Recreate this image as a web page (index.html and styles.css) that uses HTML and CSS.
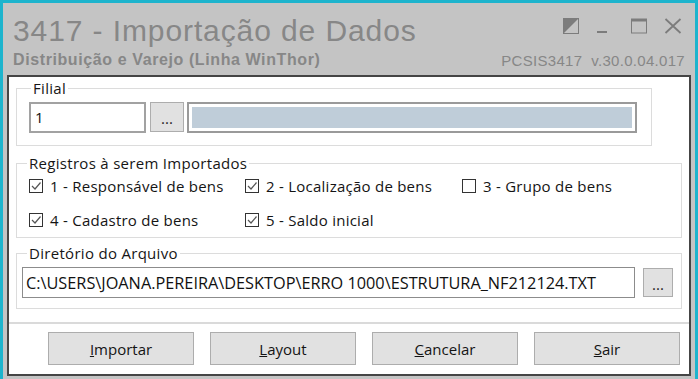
FILE: index.html
```html
<!DOCTYPE html>
<html lang="pt-BR">
<head>
    <meta charset="UTF-8">
    <title>3417 - Importação de Dados</title>
    <link rel="stylesheet" href="styles.css">
</head>
<body>
    <div class="window">
        <div class="titlebar">
            <div class="title-left">
                <div class="title">3417 - Importação de Dados</div>
                <div class="subtitle">Distribuição e Varejo (Linha WinThor)</div>
            </div>
            <div class="title-right">
                <div class="controls">
                    <svg width="18" height="16" viewBox="0 0 18 16">
                        <rect x="1.5" y="0.5" width="15" height="15" fill="none" stroke="#7c7c7c"/>
                        <polygon points="1.5,0.5 16.5,0.5 1.5,15.5" fill="#7c7c7c"/>
                    </svg>
                    <svg width="18" height="16" viewBox="0 0 18 16">
                        <rect x="1" y="13" width="10" height="2" fill="#7c7c7c"/>
                    </svg>
                    <svg width="18" height="16" viewBox="0 0 18 16">
                        <rect x="1.5" y="1.5" width="15" height="13.5" fill="none" stroke="#7c7c7c"/>
                        <rect x="1" y="0.5" width="16" height="3" fill="#7c7c7c"/>
                    </svg>
                    <svg width="18" height="16" viewBox="0 0 18 16">
                        <path d="M1.5 1 L16.5 15 M16.5 1 L1.5 15" stroke="#7c7c7c" stroke-width="1.8"/>
                    </svg>
                </div>
                <div class="version">PCSIS3417&nbsp; v.30.0.04.017</div>
            </div>
        </div>

        <div class="panel">
            <fieldset class="group filial">
                <legend>Filial</legend>
                <div class="group-body">
                    <div class="field code">1</div>
                    <button class="dots">...</button>
                    <div class="field desc"><div class="desc-fill"></div></div>
                </div>
            </fieldset>

            <fieldset class="group registros">
                <legend>Registros à serem Importados</legend>
                <div class="group-body">
                    <label class="opt"><span class="box"><svg width="12" height="12" viewBox="0 0 12 12"><polyline points="2,6 5,9 10.5,2.5" fill="none" stroke="#555" stroke-width="1.2"/></svg></span>1 - Responsável de bens</label>
                    <label class="opt"><span class="box"><svg width="12" height="12" viewBox="0 0 12 12"><polyline points="2,6 5,9 10.5,2.5" fill="none" stroke="#555" stroke-width="1.2"/></svg></span>2 - Localização de bens</label>
                    <label class="opt"><span class="box"></span>3 - Grupo de bens</label>
                    <label class="opt"><span class="box"><svg width="12" height="12" viewBox="0 0 12 12"><polyline points="2,6 5,9 10.5,2.5" fill="none" stroke="#555" stroke-width="1.2"/></svg></span>4 - Cadastro de bens</label>
                    <label class="opt"><span class="box"><svg width="12" height="12" viewBox="0 0 12 12"><polyline points="2,6 5,9 10.5,2.5" fill="none" stroke="#555" stroke-width="1.2"/></svg></span>5 - Saldo inicial</label>
                </div>
            </fieldset>

            <fieldset class="group diretorio">
                <legend>Diretório do Arquivo</legend>
                <div class="group-body">
                    <div class="field path">C:\USERS\JOANA.PEREIRA\DESKTOP\ERRO 1000\ESTRUTURA_NF212124.TXT</div>
                    <button class="dots small">...</button>
                </div>
            </fieldset>

            <div class="footer">
                <button class="action"><u>I</u>mportar</button>
                <button class="action"><u>L</u>ayout</button>
                <button class="action"><u>C</u>ancelar</button>
                <button class="action"><u>S</u>air</button>
            </div>
        </div>
    </div>
</body>
</html>
```

FILE: styles.css
```css
* {
    margin: 0;
    padding: 0;
    box-sizing: border-box;
}

body {
    width: 698px;
    height: 379px;
    overflow: hidden;
    background: #c4c4c4;
    font-family: "Open Sans", "Liberation Sans", sans-serif;
}

.window {
    width: 698px;
    height: 379px;
    border-top: 3px solid #1db4cd;
    border-left: 3px solid #1db4cd;
    border-right: 3px solid #1db4cd;
    display: flex;
    flex-direction: column;
}

/* title area */
.titlebar {
    height: 72px;
    flex-shrink: 0;
    display: flex;
    justify-content: space-between;
    padding: 11px 10px 0 10px;
    color: #878787;
    font-family: "Liberation Sans", Arial, sans-serif;
}

.title {
    font-size: 30px;
    line-height: 34px;
    letter-spacing: 0.9px;
}

.subtitle {
    margin-top: 3px;
    font-size: 16px;
    line-height: 18px;
    font-weight: bold;
    letter-spacing: 0.6px;
}

.title-right {
    display: flex;
    flex-direction: column;
    align-items: flex-end;
}

.controls {
    display: flex;
    gap: 16px;
    margin-top: 4px;
    margin-right: 3px;
}

.version {
    margin-top: 18px;
    font-size: 15px;
    line-height: 18px;
    letter-spacing: 0.3px;
}

/* main panel */
.panel {
    margin: 0 4px;
    height: 301px;
    background: #fff;
    border: 2px solid #454545;
    display: flex;
    flex-direction: column;
}

.group {
    border: 1px solid #dcdcdc;
    min-width: 0;
}

.group legend {
    margin-left: 10px;
    padding: 0 2px;
    font-size: 15px;
    line-height: 20px;
    letter-spacing: 0.3px;
    color: #161616;
}

.filial {
    margin: 1px 37px 0 7px;
}

.filial legend {
    margin-left: 14px;
}

.filial .group-body {
    display: flex;
    align-items: flex-start;
    padding: 4px 14px 12px 12px;
}

.field {
    height: 31px;
    border: 2px solid #a2a2a2;
    background: #fff;
    font-size: 15px;
    color: #111;
}

.code {
    width: 117px;
    padding: 3px 0 0 4px;
}

.dots {
    width: 34px;
    height: 30px;
    margin-left: 4px;
    background: #e1e1e1;
    border: 1px solid #adadad;
    font-family: "Open Sans", sans-serif;
    font-size: 15px;
    color: #222;
    padding-top: 2px;
}

.desc {
    flex: 1;
    margin-left: 3px;
    padding: 3px;
    border-color: #9a9a9a;
}

.desc-fill {
    height: 100%;
    background: #bfcdd9;
}

.registros {
    margin: 7px 7px 0 7px;
}

.registros .group-body {
    display: grid;
    grid-template-columns: 216px 217px 1fr;
    row-gap: 14px;
    padding: 3px 12px 7px 12px;
}

.opt {
    display: flex;
    align-items: center;
    gap: 7px;
    height: 20px;
    font-size: 15px;
    letter-spacing: 0.25px;
    color: #141414;
}

.box {
    width: 14px;
    height: 14px;
    border: 1px solid #333;
    background: #fff;
    display: flex;
    align-items: center;
    justify-content: center;
}

.diretorio {
    margin: 5px 7px 0 7px;
}

.diretorio .group-body {
    display: flex;
    align-items: flex-start;
    gap: 8px;
    padding: 4px 8px 10px 5px;
}

.path {
    flex: 1;
    border: 1px solid #8c8c8c;
    padding: 4px 0 0 3px;
    font-size: 16.3px;
    white-space: nowrap;
}

.dots.small {
    width: 30px;
    height: 29px;
    margin: 1px 0 0 0;
}

/* bottom buttons */
.footer {
    margin-top: auto;
    height: 52px;
    border-top: 2px solid #dadada;
    display: flex;
    gap: 16px;
    padding: 8px 0 9px 39px;
}

.action {
    width: 146px;
    height: 33px;
    background: #e1e1e1;
    border: 1px solid #adadad;
    font-family: "Open Sans", sans-serif;
    font-size: 15px;
    color: #141414;
}
```
